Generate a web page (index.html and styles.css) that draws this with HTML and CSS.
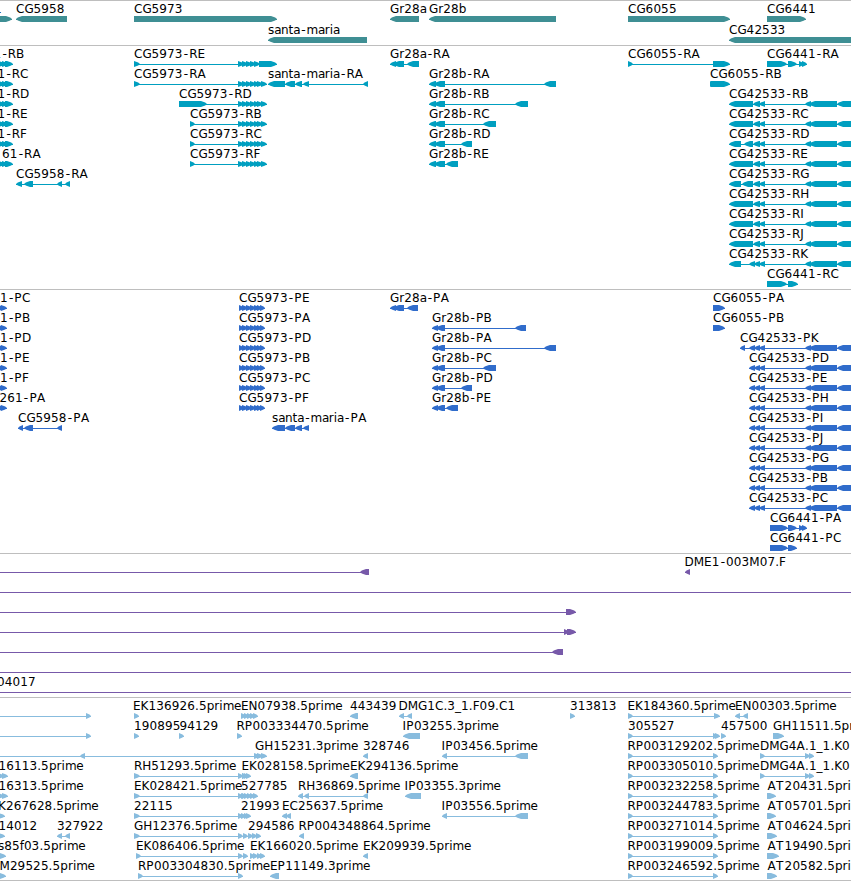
FILE: index.html
```html
<!DOCTYPE html>
<html lang="en">
<head>
    <meta charset="UTF-8">
    <meta name="viewport" content="width=device-width, initial-scale=1.0">
    <title>Genome Browser</title>
    <link rel="stylesheet" href="styles.css">
</head>
<body>
    <div class="browser">
        <svg class="track genes" id="genes"></svg>
        <svg class="track transcripts" id="transcripts"></svg>
        <svg class="track proteins" id="proteins"></svg>
        <svg class="track clones" id="clones"></svg>
        <svg class="track ests" id="ests"></svg>
    </div>
    <script src="tracks.js"></script>
</body>
</html>
```

FILE: styles.css
```css
body {
    margin: 0;
    background: #ffffff;
    overflow: hidden;
}

.browser {
    display: flex;
    flex-direction: column;
    width: 851px;
    border-bottom: 1px solid #bebebe;
}

.track {
    display: block;
    box-sizing: border-box;
    width: 100%;
    border-top: 1px solid #bebebe;
    overflow: hidden;
}

.track text {
    font-family: "DejaVu Sans", sans-serif;
    font-size: 12px;
    fill: #000000;
}

.track .dash {
    font-family: "DejaVu Sans Mono", monospace;
    font-size: 13px;
}

.genes {
    height: 45px;
    fill: #3f8f94;
}

.transcripts {
    height: 244px;
    fill: #009fc0;
}

.proteins {
    height: 264px;
    fill: #306ccb;
}

.clones {
    height: 144px;
    fill: #7759a9;
}

.ests {
    height: 183px;
    fill: #88bcde;
}
```

FILE: tracks.js
```js
const SVG = 'http://www.w3.org/2000/svg';

// label advance widths in px
const ADVANCE = {
    A: 8.4, C: 8.4, D: 9.2, E: 7.6, F: 6.9, G: 9.2, H: 9, I: 3.7, J: 3.8, K: 7.9, M: 10.4,
    N: 9, P: 7.7, R: 8.3, T: 8.7, a: 6.8, b: 7.6, f: 4.2, i: 3.4, m: 11.3, n: 7.5, p: 7.6,
    r: 5, s: 6.2, t: 4.7, e: 7.2, '-': 6.6, '.': 3.9, '_': 6
};

function add(svg, name, attrs) {
    const el = document.createElementNS(SVG, name);
    for (const key in attrs) {
        el.setAttribute(key, attrs[key]);
    }
    svg.appendChild(el);
    return el;
}

function drawBlock(svg, dir, a, b, top) {
    const tip = Math.min(6, b - a);
    let points;
    if (dir === '>') {
        points = [[a, top], [b - tip, top], [b - tip * 0.3, top + 1.6], [b, top + 3], [b - tip * 0.3, top + 4.4], [b - tip, top + 6], [a, top + 6]];
    } else {
        points = [[b, top], [a + tip, top], [a + tip * 0.3, top + 1.6], [a, top + 3], [a + tip * 0.3, top + 4.4], [a + tip, top + 6], [b, top + 6]];
    }
    add(svg, 'polygon', { points: points.join(' ') });
}

function drawLabel(svg, label, x, y) {
    const text = add(svg, 'text', { y: y });
    let pos = x;
    label.split(/(-)/).forEach(part => {
        const xs = [];
        for (const ch of part) {
            xs.push((ch === '-' ? pos - 0.6 : pos).toFixed(1));
            pos += ADVANCE[ch] || 7.75;
        }
        if (part) {
            const span = add(text, 'tspan', { x: xs.join(' ') });
            if (part === '-') {
                span.setAttribute('class', 'dash');
            }
            span.textContent = part;
        }
    });
}

// feature: [row, label, label x, direction, blocks, line start, line end]
function drawTrack(id, step, features) {
    const svg = document.getElementById(id);
    features.forEach(([row, label, x, dir, blocks, from, to]) => {
        const top = 15 + row * step;
        const start = from !== undefined ? from : blocks[0][0];
        const end = to !== undefined ? to : blocks[blocks.length - 1][1];
        add(svg, 'rect', { x: start, y: top + 3, width: end - start, height: 1 });
        blocks.forEach(([a, b]) => drawBlock(svg, dir, a, b, top));
        if (label) {
            drawLabel(svg, label, x, top - 3);
        }
    });
}

drawTrack('genes', 21, [
    [0, '1', -6, '>', [[-10, 12]]],
    [0, 'CG5958', 16, '<', [[16, 67]]],
    [0, 'CG5973', 134, '>', [[134, 277]]],
    [1, 'santa-maria', 268, '<', [[268, 367]]],
    [0, 'Gr28a', 390, '<', [[390, 419]]],
    [0, 'Gr28b', 429, '<', [[429, 556]]],
    [0, 'CG6055', 628, '>', [[628, 730]]],
    [0, 'CG6441', 767, '>', [[767, 806]]],
    [1, 'CG42533', 729, '<', [[729, 870]]]
]);

const cut = [[-6, 2], [-2, 5], [2, 8], [5, 13]];
const small = [[238, 244], [242, 248], [246, 252], [250, 256], [254, 260]];
const ra = [...small, [257, 263], [261, 267]];
const tail = [[805, 811], [809, 837], [837, 870]];
const pair = [[753, 760], [759, 765], ...tail];
const triple = [[749, 755], [754, 760], [759, 765], ...tail];

const transcripts = [
    [0, '1-RB', -6.5, '>', cut],
    [1, '1-RC', -2.5, '>', cut],
    [2, '1-RD', -2.5, '>', cut],
    [3, '1-RE', -2.5, '>', cut],
    [4, '1-RF', -2.5, '>', cut],
    [5, '61-RA', 2, '>', cut],
    [6, 'CG5958-RA', 16, '<', [[16, 22], [24, 33], [57, 62], [65, 70]]],
    [0, 'CG5973-RE', 134, '>', [[134, 140], ...small, [259, 277]]],
    [1, 'CG5973-RA', 134, '>', [[134, 140], ...ra]],
    [2, 'CG5973-RD', 179, '>', [[179, 207], ...ra]],
    [3, 'CG5973-RB', 190, '>', [[190, 195], ...ra]],
    [4, 'CG5973-RC', 190, '>', [[190, 195], ...ra]],
    [5, 'CG5973-RF', 190, '>', [[190, 195], ...ra]],
    [1, 'santa-maria-RA', 268, '<', [[268, 285], [285, 295], [295, 302], [303, 309], [363, 368]]],
    [0, 'Gr28a-RA', 390, '<', [[390, 396], [393, 404], [407, 419]]],
    [0, 'CG6055-RA', 628, '>', [[628, 633], [713, 730]]],
    [1, 'CG6055-RB', 710, '>', [[710, 714], [711, 730]]],
    [0, 'CG6441-RA', 767, '>', [[767, 787], [788, 797], [799, 804], [802, 807]]],
    [11, 'CG6441-RC', 767, '>', [[767, 787], [788, 798]]]
];
[['A', 544, 556], ['B', 515, 528], ['C', 483, 496], ['D', 461, 472], ['E', 446, 458]].forEach(([name, a, b], i) => {
    transcripts.push([i + 1, 'Gr28b-R' + name, 429, '<', [[429, 436], [434, 445], [a, b]]]);
});
['B', 'C', 'D', 'E', 'G', 'H', 'I', 'J', 'K'].forEach((name, i) => {
    let blocks = [[729, 753], ...pair];
    if (name === 'D') blocks = [[729, 741], [744, 753], ...pair];
    if (name === 'G') blocks = [[729, 741], [742, 753], ...pair];
    if (name === 'K') blocks = [[729, 741], ...triple];
    transcripts.push([i + 2, 'CG42533-R' + name, 729, '<', blocks]);
});
drawTrack('transcripts', 20, transcripts);

const proteins = [
    [5, '261-PA', -0.5, '>', [[-5, 3], [-1, 5], [1, 7]]],
    [6, 'CG5958-PA', 18, '<', [[18, 23], [24, 33], [57, 62]]],
    [6, 'santa-maria-PA', 272, '<', [[272, 285], [285, 295], [295, 302], [303, 309]]],
    [0, 'Gr28a-PA', 390, '<', [[390, 396], [393, 404], [407, 418]]],
    [0, 'CG6055-PA', 713, '>', [[713, 725]]],
    [1, 'CG6055-PB', 713, '>', [[713, 725]]],
    [2, 'CG42533-PK', 740, '<', [[740, 745], ...triple]],
    [11, 'CG6441-PA', 770, '>', [[770, 788], [788, 797], [799, 804], [802, 807]]],
    [12, 'CG6441-PC', 770, '>', [[770, 788], [788, 797]]]
];
['C', 'B', 'D', 'E', 'F'].forEach((name, i) => {
    proteins.push([i, '1-P' + name, 0, '>', [[-5, 3], [-1, 5], [1, 7]]]);
});
['E', 'A', 'D', 'B', 'C', 'F'].forEach((name, i) => {
    proteins.push([i, 'CG5973-P' + name, 239, '>', [[239, 244], ...small.slice(1), [257, 262], [260, 265]]]);
});
[['B', 515, 526], ['A', 544, 556], ['C', 483, 496], ['D', 461, 472], ['E', 446, 458]].forEach(([name, a, b], i) => {
    proteins.push([i + 1, 'Gr28b-P' + name, 432, '<', [[432, 438], [436, 445], [a, b]]]);
});
['D', 'E', 'H', 'I', 'J', 'G', 'B', 'C'].forEach((name, i) => {
    proteins.push([i + 3, 'CG42533-P' + name, 749, '<', triple]);
});
drawTrack('proteins', 20, proteins);

drawTrack('clones', 20, [
    [0, '', 0, '<', [[360, 369]], 0],
    [0, 'DME1-003M07.F', 684.5, '<', [[685, 690]]],
    [1, '', 0, '<', [], 0, 851],
    [2, '', 0, '>', [[566, 576]], 0],
    [3, '', 0, '>', [[564, 569], [567, 576]], 0],
    [4, '', 0, '<', [[552, 563]], 0],
    [5, '', 0, '<', [], 0, 851],
    [6, '04017', -3, '<', [], 0, 851]
]);

const ests = [
    [0, '', 0, '>', [[86, 91]], 0],
    [0, 'EK136926.5prime', 133, '>', [[134, 139]]],
    [0, 'EN07938.5prime', 241, '>', [[241, 246], [244, 249], [247, 252], [250, 255], [253, 258]]],
    [0, '443439', 350, '<', [[350, 358]]],
    [0, 'DMG1C.3_1.F09.C1', 398.5, '<', [[399, 404], [407, 412]]],
    [0, '313813', 570, '>', [[570, 575]]],
    [0, 'EK184360.5prime', 627.5, '>', [[628, 633], [714, 720]]],
    [0, 'EN00303.5prime', 735, '<', [[735, 740], [743, 748]]],

    [1, '', 0, '>', [[86, 91]], 0],
    [1, '190895', 134, '>', [[134, 139]]],
    [1, '94129', 179.5, '>', [[179, 184]]],
    [1, 'RP003334470.5prime', 236.5, '>', [[237, 242]]],
    [1, 'IP03255.3prime', 402.5, '<', [[403, 420]]],
    [1, '305527', 628, '>', [[628, 633], [713, 718], [715, 720]]],
    [1, '457500', 721, '>', [[721, 726]]],
    [1, 'GH11511.5prime', 773, '>', [[773, 784]]],

    [2, '', 0, '<', [[80, 85]], 0, 256],
    [2, 'GH15231.3prime', 255, '>', [[254, 260], [257, 263], [261, 267]]],
    [2, '328746', 363, '<', [[363, 368]]],
    [2, 'IP03456.5prime', 441.5, '<', [[442, 447], [515, 528]]],

    [3, '16113.5prime', -1.5, '>', [[-5, 4], [2, 8]]],
    [3, 'RH51293.5prime', 134, '>', [[134, 140], [238, 243], [242, 246], [244, 248]]],
    [3, 'EK028158.5prime', 241.5, '>', [[242, 247], [246, 251]]],
    [3, 'EK294136.5prime', 350, '<', [[350, 358]]],

    [4, '16313.5prime', -1.5, '>', [[-5, 4], [2, 8]]],
    [4, 'EK028421.5prime', 134, '>', [[134, 140], [238, 243], [242, 246]]],
    [4, '527785', 241, '>', [[241, 246], [244, 249], [247, 252], [250, 255], [253, 258]]],
    [4, 'RH36869.5prime', 298, '<', [[298, 303], [304, 309], [363, 368]]],
    [4, 'IP03355.3prime', 404.5, '<', [[405, 421]]],

    [5, 'K267628.5prime', -2, '>', [[-5, 5]]],
    [5, '22115', 134, '>', [[134, 140], [238, 243]]],
    [5, '21993', 241, '>', [[241, 246], [244, 249], [246, 251]]],
    [5, 'EC25637.5prime', 282, '<', [[282, 287], [286, 291]]],
    [5, 'IP03556.5prime', 441.5, '<', [[442, 447], [515, 528]]],

    [6, '14012', -1.5, '>', [[-5, 5]]],
    [6, '327922', 57, '<', [[57, 62], [65, 70]]],
    [6, 'GH12376.5prime', 134, '>', [[134, 140], [238, 243], [243, 248]]],
    [6, '294586', 248, '>', [[248, 253], [252, 257], [256, 261]]],
    [6, 'RP004348864.5prime', 298.5, '<', [[299, 304]]],

    [7, 's85f03.5prime', -2, '>', [[-5, 2], [0, 6]]],
    [7, 'EK086406.5prime', 136, '>', [[136, 141], [238, 243], [243, 248]]],
    [7, 'EK166020.5prime', 250, '>', [[250, 255], [253, 258], [257, 262], [260, 265]]],
    [7, 'EK209939.5prime', 363, '<', [[363, 368]]],

    [8, 'M29525.5prime', -0.5, '>', [[-5, 2], [0, 6]]],
    [8, 'RP003304830.5prime', 138, '>', [[138, 143], [238, 243]]],
    [8, 'EP11149.3prime', 270, '<', [[270, 279]]]
];
['RP003129202', 'RP003305010', 'RP003232258', 'RP003244783', 'RP003271014', 'RP003199009', 'RP003246592'].forEach((name, i) => {
    ests.push([i + 2, name + '.5prime', 627.5, '>', [[628, 633], [713, 718]]]);
});
[2, 3].forEach(row => {
    ests.push([row, 'DMG4A.1_1.K0', 760, '>', [[760, 765], [805, 810], [809, 814]]]);
});
// the window ends right after "5pri" on these
[['AT20431', 776], ['AT05701', 776], ['AT04624', 777], ['AT19490', 779], ['AT20582', 777]].forEach(([name, end], i) => {
    ests.push([i + 4, name + '.5pri', 767.5, '>', [[767, end]]]);
});
drawTrack('ests', 20, ests);
```
